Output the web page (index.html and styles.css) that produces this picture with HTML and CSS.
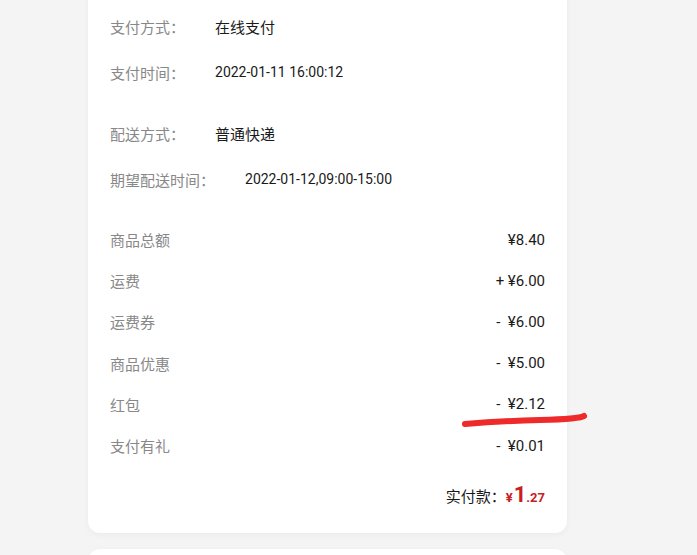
FILE: index.html
```html
<!DOCTYPE html>
<html lang="zh-CN">

<head>
    <meta charset="UTF-8">
    <meta name="viewport" content="width=device-width, initial-scale=1.0">
    <title>订单详情</title>
    <link rel="stylesheet" href="styles.css">
</head>

<body>

    <div class="page">

        <div class="card">

            <!-- 支付信息 -->
            <div class="info-group">
                <div class="info-row">
                    <span class="label">支付方式：</span>
                    <span class="value">在线支付</span>
                </div>
                <div class="info-row">
                    <span class="label">支付时间：</span>
                    <span class="value num">2022-01-11 16:00:12</span>
                </div>
            </div>

            <!-- 配送信息 -->
            <div class="info-group">
                <div class="info-row">
                    <span class="label">配送方式：</span>
                    <span class="value">普通快递</span>
                </div>
                <div class="info-row">
                    <span class="label">期望配送时间：</span>
                    <span class="value num">2022-01-12,09:00-15:00</span>
                </div>
            </div>

            <!-- 金额明细 -->
            <div class="price-group">
                <div class="price-row">
                    <span class="label">商品总额</span>
                    <span class="amount">¥8.40</span>
                </div>
                <div class="price-row">
                    <span class="label">运费</span>
                    <span class="amount">+ ¥6.00</span>
                </div>
                <div class="price-row">
                    <span class="label">运费券</span>
                    <span class="amount">-&nbsp; ¥6.00</span>
                </div>
                <div class="price-row">
                    <span class="label">商品优惠</span>
                    <span class="amount">-&nbsp; ¥5.00</span>
                </div>
                <div class="price-row">
                    <span class="label">红包</span>
                    <span class="amount">-&nbsp; ¥2.12</span>
                </div>
                <div class="price-row">
                    <span class="label">支付有礼</span>
                    <span class="amount">-&nbsp; ¥0.01</span>
                </div>
            </div>

            <div class="total-row">
                <span class="total-label">实付款：</span>
                <span class="total-price"><span class="yen">¥</span><span class="int">1</span><span class="dec">.27</span></span>
            </div>
        </div>

        <div class="card next-card"></div>

        <!-- hand drawn mark -->
        <svg class="mark" width="697" height="555" viewBox="0 0 697 555">
            <path d="M465 424 Q 500 421 540 420 T 584 416" fill="none" stroke="#ee2a2a" stroke-width="6" stroke-linecap="round" />
        </svg>
    </div>

</body>

</html>
```

FILE: styles.css
```css
* {
    margin: 0;
    padding: 0;
    box-sizing: border-box;
}

body {
    background-color: #f4f4f4;
    font-family: Roboto, "Noto Sans CJK SC", sans-serif;
    overflow: hidden;
}

.page {
    position: relative;
    display: flow-root;
    height: 555px;
    padding-left: 88px;
    overflow: hidden;
}

.card {
    width: 479px;
    background: #fff;
    border-radius: 12px;
    box-shadow: 0 2px 6px rgba(0, 0, 0, 0.04);
    padding: 0 22px 19px 22px;
    margin-top: -16px;
}

.info-group {
    padding-top: 20px;
}

.info-group + .info-group {
    padding-top: 16px;
}

.info-row {
    display: flex;
    align-items: center;
    height: 45px;
}

.info-row + .info-row {
    height: 46px;
}

.label {
    color: #888;
    font-size: 15px;
}

.value {
    margin-left: 30px;
    color: #1a1a1a;
    font-size: 15px;
}

.value.num {
    font-size: 14px;
}

.price-group {
    padding-top: 17px;
}

.price-row {
    display: flex;
    justify-content: space-between;
    align-items: center;
    height: 41.2px;
}

.amount {
    color: #1a1a1a;
    font-size: 15px;
}

.total-row {
    display: flex;
    justify-content: flex-end;
    align-items: baseline;
    height: 40px;
    margin-top: 8px;
    padding-top: 8px;
}

.total-label {
    color: #1a1a1a;
    font-size: 15px;
}

.total-price {
    color: #c8201f;
    font-weight: bold;
}

.yen {
    font-size: 13px;
    margin-right: 1px;
}

.int {
    font-size: 22px;
}

.dec {
    font-size: 13px;
}

.next-card {
    margin-top: 16px;
    height: 40px;
    border-radius: 12px 12px 0 0;
}

.mark {
    position: absolute;
    top: 0;
    left: 0;
    pointer-events: none;
}
```
